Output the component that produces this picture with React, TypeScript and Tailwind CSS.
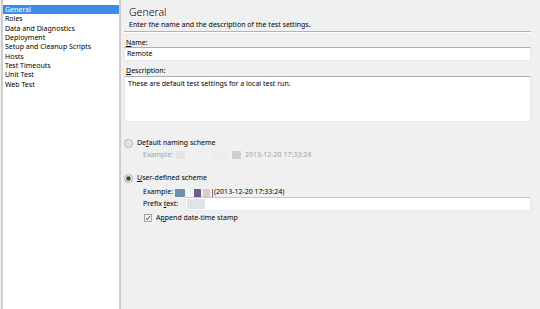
import React from 'react'

const font = { fontFamily: '"Noto Sans", "Open Sans", sans-serif' }

const pages = ['General', 'Roles', 'Data and Diagnostics', 'Deployment', 'Setup and Cleanup Scripts', 'Hosts', 'Test Timeouts', 'Unit Test', 'Web Test']

function Radio({ checked }: { checked?: boolean }) {
  return (
    <svg width="9" height="9" viewBox="0 0 9 9" className="shrink-0">
      <circle cx="4.5" cy="4.5" r="4" fill="#f4f4f4" stroke="#9a9a9a" strokeWidth="0.8" />
      <circle cx="4.5" cy="4.5" r="2.8" fill="#e2e2e2" />
      {checked && <circle cx="4.5" cy="4.5" r="2.2" fill="#2f4f3a" />}
    </svg>
  )
}

function Check() {
  return (
    <svg width="8" height="8" viewBox="0 0 8 8" className="shrink-0">
      <rect x="0.5" y="0.5" width="7" height="7" fill="#f6f6f6" stroke="#8e8f8f" strokeWidth="0.8" />
      <path d="M2 4.2 L3.3 5.8 L6 2" fill="none" stroke="#333" strokeWidth="0.9" />
    </svg>
  )
}

export default function App() {
  return (
    <div className="flex h-[309px] w-[540px] overflow-hidden bg-[#f0f0f0] text-black" style={font}>
      {/* left list */}
      <div className="ml-px h-full w-[120px] shrink-0 border-x-2 border-[#cdcdcd] bg-white pt-[5px]">
        {pages.map((p, i) => (
          <div
            key={p}
            className={
              i === 0
                ? 'h-[9.33px] bg-[#3a8ee6] pl-[2px] text-[7px] leading-[9.33px] text-white'
                : 'h-[9.33px] pl-[2px] text-[7px] leading-[9.33px]'
            }
          >
            {p}
          </div>
        ))}
      </div>

      {/* right panel */}
      <div className="flex flex-1 flex-col pl-[3px] pr-[9px] text-[7px]">
        <div className="h-[20px] pl-[5px] pt-[6px] text-[10.5px] font-light leading-[13px]">General</div>
        <div className="h-[9px] pl-[5px] leading-[9px]">Enter the name and the description of the test settings.</div>
        <div className="mt-[2px] h-[2px] border-t border-b border-t-[#b4b4b4] border-b-white" />

        <div className="mt-[5px] h-[9px] pl-[2px] leading-[9px]">
          <span className="underline">N</span>ame:
        </div>
        <div className="flex h-[14px] items-center border border-[#e3e9ef] border-t-[#abadb3] bg-white pl-[2px]">Remote</div>

        <div className="mt-[5px] h-[10px] pl-[2px] leading-[10px]">
          <span className="underline">D</span>escription:
        </div>
        <div className="h-[46px] border border-[#e3e9ef] border-t-[#abadb3] bg-white pl-[3px] pt-[2px] leading-[9px]">
          These are default test settings for a local test run.
        </div>

        <div className="mt-[16px] flex h-[10px] items-center gap-[4px]">
          <Radio />
          <span>
            De<span className="underline">f</span>ault naming scheme
          </span>
        </div>
        <div className="mt-[2px] flex h-[10px] items-center pl-[19px] text-[#a2a2a2]">
          <span className="mr-[3px]">Example:</span>
          <span className="h-[8px] w-[9px] bg-[#e4e4e4]" />
          <span className="mt-[6px] h-[1px] w-[18px] bg-[#ececec]" />
          <span className="ml-[9px] h-[8px] w-[16px] bg-[#ececec]" />
          <span className="ml-[4px] h-[8px] w-[9px] bg-[#cfcfcf]" />
          <span className="ml-[4px]">2013-12-20 17:33:24</span>
        </div>

        <div className="mt-[13px] flex h-[10px] items-center gap-[4px]">
          <Radio checked />
          <span>
            <span className="underline">U</span>ser-defined scheme
          </span>
        </div>
        <div className="mt-[5px] flex h-[9px] items-center pl-[19px]">
          <span className="mr-[2px]">Example:</span>
          <span className="h-[8px] w-[10px] bg-[#6f8fa8]" />
          <span className="h-[8px] w-[9px] bg-[#f4f6f8]" />
          <span className="h-[8px] w-[7px] bg-[#6e5e8e]" />
          <span className="ml-[2px] h-[8px] w-[7px] bg-[#d9ccc8]" />
          <span className="ml-[2px] h-[8px] w-[1px] bg-[#7a6a7a]" />
          <span className="ml-[1px]">(2013-12-20 17:33:24)</span>
        </div>
        <div className="flex h-[14px] items-center pl-[19px]">
          <span className="w-[42px] shrink-0">
            Prefix <span className="underline">t</span>ext:
          </span>
          <div className="flex h-[14px] flex-1 items-center border border-[#e3e9ef] border-t-[#c4c6cb] bg-white pl-px">
            <span className="h-[10px] w-[18px] bg-[#dde4ea]" />
          </div>
        </div>
        <div className="mt-[2px] flex h-[10px] items-center gap-[4px] pl-[20px]">
          <Check />
          <span>
            A<span className="underline">p</span>pend date-time stamp
          </span>
        </div>
      </div>
    </div>
  )
}
